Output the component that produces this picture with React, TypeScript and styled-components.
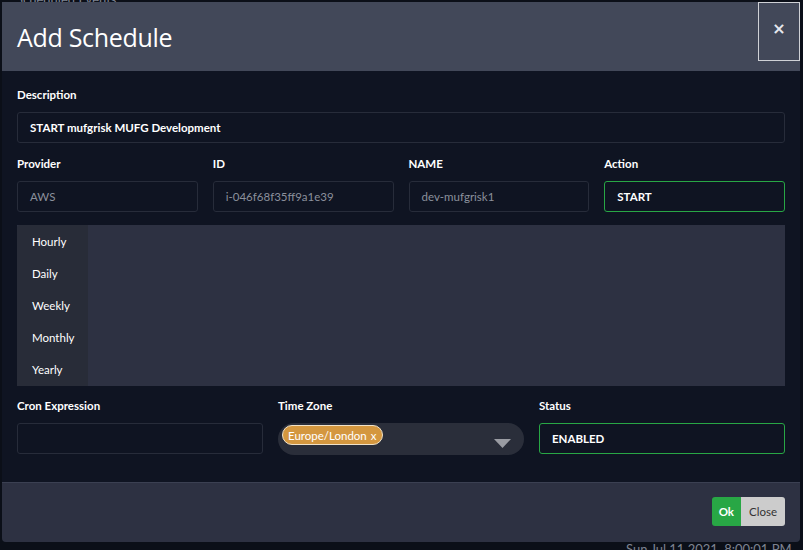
import React from "react";
import styled, { createGlobalStyle } from "styled-components";

const Global = createGlobalStyle`
  html, body { margin: 0; padding: 0; background: #0b0f18; }
  body { font-family: Lato, "Noto Sans", sans-serif; width: 803px; height: 550px; overflow: hidden; position: relative; }
  * { box-sizing: border-box; }
`;

const Backdrop = styled.div`
  position: absolute;
  inset: 0;
  background: #0b0f18;
`;

const BgText = styled.div<{ $x: number; $y: number }>`
  position: absolute;
  left: ${(p) => p.$x}px;
  top: ${(p) => p.$y}px;
  white-space: nowrap;
  color: #7d8290;
  font-size: 13px;
`;

const Modal = styled.div`
  position: absolute;
  left: 2px;
  top: 2px;
  width: 798px;
  height: 540px;
  background: #0f1422;
  border-radius: 0 0 4px 4px;
  display: flex;
  flex-direction: column;
  overflow: hidden;
`;

const Header = styled.div`
  height: 70px;
  background: #424859;
  display: flex;
  align-items: flex-start;
  justify-content: space-between;
  padding-left: 15px;
`;

const Title = styled.h1`
  margin: 0;
  padding-top: 17px;
  font-family: "Open Sans", sans-serif;
  font-weight: 400;
  font-size: 25px;
  line-height: 36px;
  color: #fff;
  letter-spacing: -0.3px;
`;

const CloseX = styled.button`
  width: 42px;
  height: 59px;
  background: transparent;
  border: 1px solid #cfd1d6;
  color: #e6e8ee;
  font-size: 16px;
  font-weight: 700;
  font-family: "DejaVu Sans", sans-serif;
  padding: 0 0 6px 0;
  line-height: 1;
`;

const Body = styled.div`
  flex: 1;
  padding: 16px 15px 0 15px;
  display: flex;
  flex-direction: column;
`;

const Label = styled.div`
  font-size: 11.5px;
  font-weight: 700;
  color: #fff;
  line-height: 16px;
  margin-bottom: 9px;
`;

const Field = styled.div`
  display: flex;
  flex-direction: column;
  min-width: 0;
`;

const Input = styled.div<{ $active?: boolean; $muted?: boolean }>`
  height: 31px;
  border: 1px solid ${(p) => (p.$active ? "#28a745" : "#272c3a")};
  border-radius: 3px;
  background: #0f1422;
  padding: 0 12px;
  display: flex;
  align-items: center;
  font-size: 11.5px;
  font-weight: ${(p) => (p.$muted ? 400 : 700)};
  color: ${(p) => (p.$muted ? "#8b909c" : "#fff")};
  white-space: nowrap;
`;

const Row4 = styled.div`
  display: grid;
  grid-template-columns: repeat(4, 1fr);
  column-gap: 15px;
  margin-top: 13px;
`;

const Row3 = styled.div`
  display: grid;
  grid-template-columns: repeat(3, 1fr);
  column-gap: 15px;
  margin-top: 12px;
`;

const TabsPanel = styled.div`
  margin-top: 13px;
  height: 161px;
  background: #2d3142;
  display: flex;
`;

const TabList = styled.div`
  width: 71px;
  background: #282c38;
  border-radius: 3px 0 0 0;
  display: flex;
  flex-direction: column;
`;

const Tab = styled.div`
  height: 32px;
  display: flex;
  align-items: center;
  padding-left: 15px;
  font-size: 11.5px;
  color: #fff;
`;

const Select = styled.div`
  height: 32px;
  border-radius: 16px;
  background: #2a2e3a;
  display: flex;
  align-items: center;
  justify-content: space-between;
  padding: 0 13px 0 4px;
`;

const Chip = styled.span`
  background: #d4973f;
  border: 1px solid #f1e2c8;
  border-radius: 10px;
  color: #fff;
  font-size: 11.5px;
  height: 20px;
  padding: 0 5px;
  display: inline-flex;
  align-items: center;
  gap: 4px;
  margin-top: -8px;
`;

const Footer = styled.div`
  height: 60px;
  background: #2d3142;
  border-top: 1px solid #3b4052;
  display: flex;
  align-items: center;
  justify-content: flex-end;
  padding: 0 15px 2px 0;
  margin-top: 27px;
`;

const BtnGroup = styled.div`
  display: flex;
  border-radius: 3px;
  overflow: hidden;
`;

const Btn = styled.button<{ $primary?: boolean }>`
  border: none;
  height: 29px;
  padding: 0 ${(p) => (p.$primary ? 7 : 8)}px;
  font-family: Lato, sans-serif;
  font-size: 11.5px;
  font-weight: ${(p) => (p.$primary ? 700 : 400)};
  background: ${(p) => (p.$primary ? "#28a745" : "#cccccc")};
  color: ${(p) => (p.$primary ? "#fff" : "#333")};
`;

export default function App() {
  return (
    <>
      <Global />
      <Backdrop>
        <BgText $x={16} $y={-9}>Scheduled Events</BgText>
        <BgText $x={626} $y={541}>Sun Jul 11 2021, 8:00:01 PM</BgText>
      </Backdrop>
      <Modal>
        <Header>
          <Title>Add Schedule</Title>
          <CloseX>×</CloseX>
        </Header>
        <Body>
          <Field>
            <Label>Description</Label>
            <Input>START mufgrisk MUFG Development</Input>
          </Field>
          <Row4>
            <Field>
              <Label>Provider</Label>
              <Input $muted>AWS</Input>
            </Field>
            <Field>
              <Label>ID</Label>
              <Input $muted>i-046f68f35ff9a1e39</Input>
            </Field>
            <Field>
              <Label>NAME</Label>
              <Input $muted>dev-mufgrisk1</Input>
            </Field>
            <Field>
              <Label>Action</Label>
              <Input $active>START</Input>
            </Field>
          </Row4>
          <TabsPanel>
            <TabList>
              {["Hourly", "Daily", "Weekly", "Monthly", "Yearly"].map((t) => (
                <Tab key={t}>{t}</Tab>
              ))}
            </TabList>
          </TabsPanel>
          <Row3>
            <Field>
              <Label>Cron Expression</Label>
              <Input />
            </Field>
            <Field>
              <Label>Time Zone</Label>
              <Select>
                <Chip>
                  Europe/London <span>x</span>
                </Chip>
                <svg width="17" height="9" viewBox="0 0 17 9" style={{ marginTop: 8 }}>
                  <path d="M0 0 L17 0 L8.5 9 Z" fill="#9a9ca3" />
                </svg>
              </Select>
            </Field>
            <Field>
              <Label>Status</Label>
              <Input $active>ENABLED</Input>
            </Field>
          </Row3>
        </Body>
        <Footer>
          <BtnGroup>
            <Btn $primary>Ok</Btn>
            <Btn>Close</Btn>
          </BtnGroup>
        </Footer>
      </Modal>
    </>
  );
}
